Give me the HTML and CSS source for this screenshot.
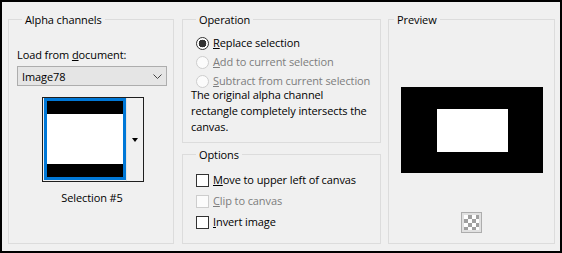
FILE: index.html
```html
<!DOCTYPE html>
<html>
<head>
<meta charset="utf-8">
<link rel="stylesheet" href="styles.css">
</head>
<body>
<div class="dialog">
  <fieldset class="group group-alpha">
    <legend>Alpha channels</legend>
    <div class="field-label">Load from <u>d</u>ocument:</div>
    <div class="select">
      <span>Image78</span>
      <svg class="chevron" width="9" height="5" viewBox="0 0 9 5"><polyline points="0.5,0.5 4.5,4.5 8.5,0.5" fill="none" stroke="#444" stroke-width="1"/></svg>
    </div>
    <div class="thumb">
      <div class="thumb-frame">
        <div class="band"></div>
        <div class="sheet"></div>
        <div class="band"></div>
      </div>
      <div class="thumb-btn"><span class="tri"></span></div>
    </div>
    <div class="caption">Selection #5</div>
  </fieldset>

  <div class="col-op">
    <fieldset class="group group-op">
      <legend>Operation</legend>
      <div class="choices">
        <label class="choice"><input type="radio" name="op" checked><span><u>R</u>eplace selection</span></label>
        <label class="choice is-disabled"><input type="radio" name="op" disabled><span><u>A</u>dd to current selection</span></label>
        <label class="choice is-disabled"><input type="radio" name="op" disabled><span><u>S</u>ubtract from current selection</span></label>
      </div>
      <p class="desc">The original alpha channel<br>rectangle completely intersects the<br>canvas.</p>
    </fieldset>
    <fieldset class="group group-options">
      <legend>Options</legend>
      <div class="checks">
        <label class="choice"><input type="checkbox"><span><u>M</u>ove to upper left of canvas</span></label>
        <label class="choice is-disabled"><input type="checkbox" disabled><span><u>C</u>lip to canvas</span></label>
        <label class="choice"><input type="checkbox"><span><u>I</u>nvert image</span></label>
      </div>
    </fieldset>
  </div>

  <fieldset class="group group-preview">
    <legend>Preview</legend>
    <div class="preview-body">
      <div class="preview-canvas"><div class="preview-sel"></div></div>
      <div class="checker-btn"><div class="checker"></div></div>
    </div>
  </fieldset>
</div>
</body>
</html>
```
FILE: styles.css
```css
* { box-sizing: border-box; }

body {
  margin: 0;
  font-family: "Open Sans", "Noto Sans", sans-serif;
  font-size: 11px;
  letter-spacing: -0.1px;
  color: #000;
  background: #f0f0f0;
}

.dialog {
  width: 562px;
  height: 253px;
  border: 2px solid #000;
  background: #f0f0f0;
  display: flex;
  padding: 9px 5px 7px 6px;
}

.group {
  margin: 0;
  border: 1px solid #dcdcdc;
  padding: 0;
  min-width: 0;
}

.group legend {
  margin-left: 5px;
  padding: 0 3px;
  height: 17px;
  line-height: 17px;
}

/* ---------- Alpha channels ---------- */
.group-alpha {
  width: 166px;
  margin-right: 8px;
  padding: 19px 6px 0 8px;
}

.field-label {
  line-height: 16px;
}

.select {
  margin-top: 3px;
  width: 150px;
  height: 20px;
  border: 1px solid #adadad;
  background: #e5e5e5;
  display: flex;
  align-items: center;
  justify-content: space-between;
  padding: 0 4px 0 4px;
}

.chevron { display: block; }

.thumb {
  margin-top: 11px;
  margin-left: 25px;
  width: 102px;
  height: 85px;
  border: 1px solid #1e1e1e;
  padding: 0 0 0 1px;
  display: flex;
  align-items: flex-start;
  background: #f0f0f0;
}

.thumb-frame {
  width: 82px;
  height: 82px;
  border: 3px solid #0078d7;
  display: flex;
  flex-direction: column;
  background: #fff;
}

.band {
  height: 13px;
  background: #000;
}

.sheet {
  flex: 1;
  background: #fff;
}

.thumb-btn {
  flex: 1;
  align-self: stretch;
  display: flex;
  align-items: center;
  justify-content: center;
  border-left: 1px solid #e3e3e3;
}

.tri {
  width: 0;
  height: 0;
  border-left: 3.5px solid transparent;
  border-right: 3.5px solid transparent;
  border-top: 4px solid #000;
}

.caption {
  margin-top: 8px;
  width: 150px;
  line-height: 16px;
  text-align: center;
}

/* ---------- Operation / Options ---------- */
.col-op {
  width: 199px;
  margin-right: 7px;
  display: flex;
  flex-direction: column;
  gap: 3px;
}

.group-op {
  height: 132px;
  padding: 7px 6px 0 8px;
}

.choices {
  display: flex;
  flex-direction: column;
  gap: 3px;
}

.choice {
  display: flex;
  align-items: center;
  height: 16px;
  line-height: 16px;
  white-space: nowrap;
}

.choice.is-disabled { color: #7d7d7d; }

.choice input {
  -webkit-appearance: none;
  appearance: none;
  width: 13px;
  height: 13px;
  margin: 0 4px 0 5px;
  border: 1px solid #333;
  background: #fff;
  flex: none;
}

.choice input[type="radio"] { border-radius: 50%; }

.choice input[type="radio"]:checked {
  background: radial-gradient(circle, #333 0 3.6px, #fff 4.1px);
}

.choice input:disabled {
  border-color: #cdcdcd;
  background: #fbfbfb;
}

.desc {
  margin: -2px 0 0 0;
  line-height: 16px;
}

.group-options {
  flex: 1;
  padding: 9px 6px 0 8px;
}

.checks {
  display: flex;
  flex-direction: column;
  gap: 5px;
}

/* ---------- Preview ---------- */
.group-preview {
  width: 167px;
  padding: 59px 0 0 0;
}

.preview-body {
  display: flex;
  flex-direction: column;
  align-items: center;
}

.preview-canvas {
  width: 142px;
  height: 86px;
  background: #000;
  padding: 22px 35px 21px 36px;
}

.preview-sel {
  width: 100%;
  height: 100%;
  background: #fff;
}

.checker-btn {
  margin-top: 39px;
  width: 21px;
  height: 21px;
  border: 1px solid #adadad;
  background: #e1e1e1;
  padding: 2px;
}

.checker {
  width: 100%;
  height: 100%;
  background-color: #fff;
  background-image: conic-gradient(#a0a0a0 25%, #fff 0 50%, #a0a0a0 0 75%, #fff 0);
  background-size: 8px 8px;
}
```
